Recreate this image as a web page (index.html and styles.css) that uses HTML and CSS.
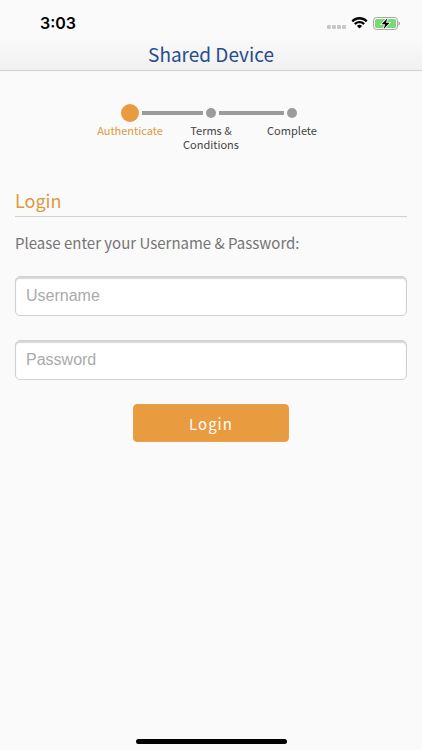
FILE: index.html
```
<!DOCTYPE html>
<html lang="en">
<head>
<meta charset="UTF-8" />
<meta name="viewport" content="width=device-width, initial-scale=1" />
<title>Shared Device</title>
<link rel="stylesheet" href="styles.css">
</head>
<body>

<header class="header">
  <div class="status-bar">
    <span class="time">3:03</span>
    <div class="status-icons">
      <svg class="signal" viewBox="0 0 20 4" aria-hidden="true">
        <rect x="1" y="0" width="4" height="4" rx="1"/>
        <rect x="6" y="0" width="4" height="4" rx="1"/>
        <rect x="11" y="0" width="4" height="4" rx="1"/>
        <rect x="16" y="0" width="4" height="4" rx="1"/>
      </svg>
      <svg class="wifi" viewBox="0 0 17 12" aria-hidden="true">
        <path d="M8.5 2.4c2.4 0 4.6.9 6.2 2.5.1.1.3.1.4 0l1.2-1.2c.1-.1.1-.3 0-.5-4.4-4.2-11.2-4.2-15.6 0-.1.2-.1.4 0 .5l1.2 1.2c.1.1.3.1.4 0C3.9 3.3 6.1 2.4 8.5 2.4z"/>
        <path d="M8.5 6.3c1.3 0 2.6.5 3.5 1.4.1.1.3.1.5 0l1.2-1.3c.1-.1.1-.3 0-.4-2.9-2.8-7.5-2.8-10.4 0-.1.1-.1.3 0 .4l1.200 1.300c.2.1.4.1.5 0 .9-.9 2.200-1.400 3.500-1.400z"/>
        <path d="M11 9.100c.1-.1.1-.3 0-.4-1.400-1.200-3.600-1.200-5 0-.1.1-.1.3 0 .4l2.200 2.200c.2.2.4.2.6 0z"/>
      </svg>
      <svg class="battery" viewBox="0 0 28 13" aria-hidden="true">
        <rect x="0.5" y="0.5" width="24" height="12" rx="3" fill="#fff" stroke="#a5a5a5"/>
        <rect x="2" y="2" width="21" height="9" rx="1.6" fill="#77db74"/>
        <path d="M25.5 4.500c2 .6 2 3.400 0 4z" fill="#a5a5a5"/>
        <path d="M14.3 1.200 8.600 7.300h3.500l-1.400 4.700 5.900-6.300h-3.600z" fill="#000" stroke="#fff" stroke-width="1.6" paint-order="stroke"/>
      </svg>
    </div>
  </div>
  <h1 class="title">Shared Device</h1>
</header>

<main class="content">
  <ol class="steps">
    <li class="step active" aria-current="step">
      <div class="track"><span class="dot"></span></div>
      <span class="step-name">Authenticate</span>
    </li>
    <li class="step">
      <div class="track"><span class="dot"></span></div>
      <span class="step-name">Terms &amp; Conditions</span>
    </li>
    <li class="step">
      <div class="track"><span class="dot"></span></div>
      <span class="step-name">Complete</span>
    </li>
  </ol>

  <form class="login-form">
    <h2 class="section-title">Login</h2>
    <p class="hint">Please enter your Username &amp; Password:</p>
    <input class="field" type="text" name="username" placeholder="Username" aria-label="Username" />
    <input class="field" type="password" name="password" placeholder="Password" aria-label="Password" />
    <button class="login-button" type="submit">Login</button>
  </form>
</main>

<div class="home-indicator"></div>

</body>
</html>
```

FILE: styles.css
```
* {
  box-sizing: border-box;
}
body {
  display: flex;
  flex-direction: column;
  min-height: 100vh;
  margin: 0;
  background-color: #fafafa;
  color: #444;
  font-family: "Noto Sans CJK JP", "Noto Sans", sans-serif;
}

/* Header */
.header {
  background: linear-gradient(#fafafa 55%, #f0f0f0);
  border-bottom: 1px solid #d0d0d0;
}
.status-bar {
  display: flex;
  align-items: center;
  justify-content: space-between;
  height: 40px;
  padding: 6px 21px 0 40px;
}
.time {
  color: #000;
  font-family: Inter, "Liberation Sans", sans-serif;
  font-size: 16px;
  font-weight: 600;
}
.status-icons {
  display: flex;
  align-items: center;
  gap: 5px;
}
.signal {
  width: 20px;
  height: 4px;
  margin-top: 8px;
  fill: #c8c8c8;
}
.wifi {
  width: 17px;
  height: 12px;
}
.battery {
  width: 28px;
  height: 13px;
}
.title {
  margin: 0;
  padding-bottom: 2px;
  color: #264d8c;
  font-size: 19px;
  font-weight: 400;
  line-height: 28px;
  text-align: center;
}

/* Progress steps */
.content {
  flex: 1;
  padding: 32px 15px;
}
.steps {
  display: flex;
  justify-content: center;
  margin: 0 0 37px;
  padding: 0;
  list-style: none;
}
.step {
  width: 81px;
  font-size: 11px;
  line-height: 14px;
  text-align: center;
}
.track {
  display: flex;
  align-items: center;
  gap: 3px;
  height: 20px;
}
.track::before,
.track::after {
  content: "";
  flex: 1;
  height: 4px;
  background-color: #9b9b9b;
}
.step:first-child .track::before,
.step:last-child .track::after {
  background-color: transparent;
}
.dot {
  width: 10px;
  height: 10px;
  border-radius: 50%;
  background-color: #9b9b9b;
}
.active {
  color: #e0983d;
}
.active .dot {
  width: 18px;
  height: 18px;
  background-color: #e99b40;
}

/* Login form */
.login-form {
  display: flex;
  flex-direction: column;
}
.section-title {
  margin: 0 0 14px;
  padding-bottom: 4px;
  border-bottom: 1px solid #d2d2d2;
  color: #e0983d;
  font-size: 18px;
  font-weight: 400;
  line-height: 24px;
}
.hint {
  margin: 0 0 21px;
  color: #757575;
  font-size: 15px;
  line-height: 24px;
}
.field {
  width: 100%;
  height: 40px;
  margin-bottom: 24px;
  padding: 0 10px;
  border: 1px solid #d0d0d0;
  border-radius: 5px;
  background-color: #fff;
  box-shadow: inset 0 2px 1px #d8d8d8;
  color: #444;
  font-family: "Liberation Sans", Arial, sans-serif;
  font-size: 16px;
}
.field::placeholder {
  color: #aaa;
}
.login-button {
  align-self: center;
  width: 40%;
  height: 38px;
  padding: 0;
  border: 1px solid #e9a04c;
  border-radius: 4px;
  background-color: #e99b40;
  color: #fff;
  font-family: inherit;
  font-size: 15px;
  letter-spacing: 1px;
  cursor: pointer;
}

.home-indicator {
  align-self: center;
  width: 151px;
  height: 5px;
  margin-bottom: 6px;
  border-radius: 3px;
  background-color: #000;
}
```
